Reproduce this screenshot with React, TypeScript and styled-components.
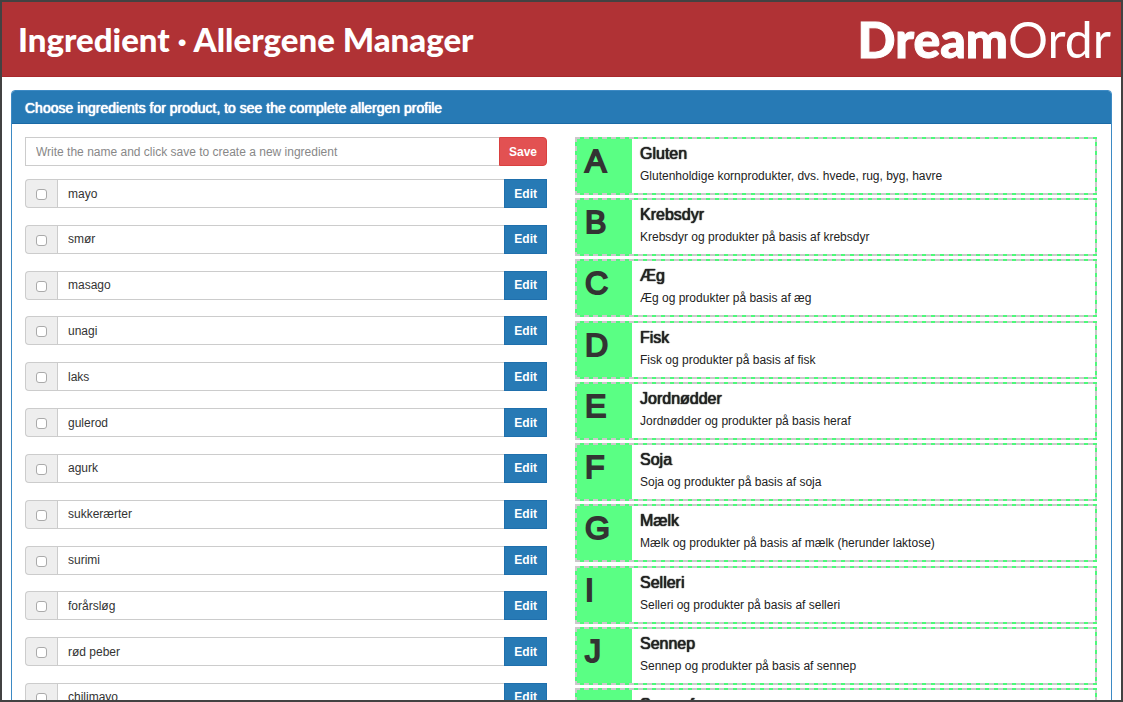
import React from "react";
import styled, { createGlobalStyle, css } from "styled-components";

const GlobalStyle = createGlobalStyle`
  * { box-sizing: border-box; }
  body {
    margin: 0;
    font-family: "Liberation Sans", Arial, sans-serif;
    font-size: 12px;
    line-height: 18px;
    color: #333;
    background: #fff;
  }
`;

const mediumWeight = css`
  font-weight: 400;
  text-shadow: 0 0 1px currentColor, 0 0 1px currentColor;
`;

const Frame = styled.div`
  height: 100vh;
  border: 2px solid #434242;
  overflow: hidden;
`;

const TopBar = styled.header`
  display: flex;
  justify-content: space-between;
  align-items: center;
  height: 75px;
  padding: 0 10px 0 16px;
  background: #b03235;
  border-bottom: 1px solid #a8292d;
  color: #fff;
`;

const PageTitle = styled.h1`
  margin: 0;
  font-family: Lato, "Open Sans", sans-serif;
  font-size: 33px;
  line-height: 40px;
  font-weight: 900;
  white-space: nowrap;
`;

const Logo = styled.a`
  color: #fff;
  font-family: Lato, "Open Sans", sans-serif;
  font-size: 50px;
  line-height: 60px;
  font-weight: 400;
  text-decoration: none;
  white-space: nowrap;
`;

const LogoStrong = styled.span`
  font-weight: 900;
  -webkit-text-stroke: 1px #fff;
`;

const Panel = styled.main`
  margin: 13px 9px;
  border: 1px solid #3d8ac4;
  border-radius: 4px;
`;

const PanelHeading = styled.h2`
  margin: 0;
  padding: 8px 13px 6px;
  background: #277ab5;
  border-bottom: 1px solid #1a6aa6;
  border-radius: 3px 3px 0 0;
  color: #fff;
  font-size: 14px;
  line-height: 18px;
  ${mediumWeight}
`;

const Columns = styled.div`
  display: grid;
  grid-template-columns: 1fr 1fr;
  gap: 28px;
  min-height: 635px;
  padding: 13px 14px 13px 13px;
`;

const Column = styled.section`
  display: flex;
  flex-direction: column;
`;

const InputGroup = styled.div`
  display: flex;
  height: 29px;
`;

const CreateForm = styled.form`
  display: flex;
  height: 29px;
  margin-bottom: 13px;
`;

const TextInput = styled.input`
  flex: 1;
  min-width: 0;
  padding: 0 10px;
  border: 1px solid #ccc;
  border-right: 0;
  border-radius: 0;
  background: #fff;
  color: #333;
  font: inherit;
  &::placeholder { color: #888; opacity: 1; }
`;

const Button = styled.button<{ $danger?: boolean }>`
  padding: 0 9px;
  border: 1px solid ${(p) => (p.$danger ? "#d9403f" : "#1f6fac")};
  border-radius: ${(p) => (p.$danger ? "0 4px 4px 0" : "0")};
  background: ${(p) => (p.$danger ? "#e25152" : "#277ab5")};
  color: #fff;
  font: inherit;
  font-weight: 700;
`;

const IngredientList = styled.ul`
  display: flex;
  flex: 1;
  flex-direction: column;
  justify-content: space-between;
  margin: 0;
  padding: 0 0 34px;
  list-style: none;
`;

const Addon = styled.label`
  display: flex;
  align-items: center;
  justify-content: center;
  width: 32px;
  border: 1px solid #ccc;
  border-right: 0;
  border-radius: 4px 0 0 4px;
  background: #eee;
`;

const Checkbox = styled.input`
  appearance: none;
  width: 11px;
  height: 11px;
  margin: 2px 0 0;
  border: 1px solid #aaa;
  border-radius: 3px;
  background: #fff;
  &:checked { background: #277ab5; }
`;

const AllergenList = styled.ul`
  display: flex;
  flex: 1;
  flex-direction: column;
  justify-content: space-between;
  margin: 0;
  padding: 0;
  list-style: none;
`;

const dashes = (direction: string) =>
  `repeating-linear-gradient(${direction}, #ccc8cb 0 5px, #4dfa7a 5px 9px)`;

const AllergenCard = styled.li`
  display: flex;
  height: 58px;
  padding: 2px;
  background:
    ${dashes("to right")} top / 100% 2px no-repeat,
    ${dashes("to right")} bottom / 100% 2px no-repeat,
    ${dashes("to bottom")} left / 2px 100% no-repeat,
    ${dashes("to bottom")} right / 2px 100% no-repeat,
    #fff;
`;

const Letter = styled.div`
  width: 55px;
  padding: 4px 8px;
  background: #5aff84;
  color: #333;
  font-size: 32px;
  line-height: 36px;
  -webkit-text-stroke: 2px #333;
`;

const AllergenText = styled.div`
  padding: 6px 8px;
`;

const AllergenName = styled.h3`
  margin: 0 0 4px;
  color: #222;
  font-size: 16px;
  line-height: 18px;
  ${mediumWeight}
`;

const AllergenInfo = styled.p`
  margin: 0;
  color: #222;
`;

const ingredients = [
  "mayo", "smør", "masago", "unagi", "laks", "gulerod", "agurk",
  "sukkerærter", "surimi", "forårsløg", "rød peber", "chilimayo",
];

const allergens = [
  ["A", "Gluten", "Glutenholdige kornprodukter, dvs. hvede, rug, byg, havre"],
  ["B", "Krebsdyr", "Krebsdyr og produkter på basis af krebsdyr"],
  ["C", "Æg", "Æg og produkter på basis af æg"],
  ["D", "Fisk", "Fisk og produkter på basis af fisk"],
  ["E", "Jordnødder", "Jordnødder og produkter på basis heraf"],
  ["F", "Soja", "Soja og produkter på basis af soja"],
  ["G", "Mælk", "Mælk og produkter på basis af mælk (herunder laktose)"],
  ["I", "Selleri", "Selleri og produkter på basis af selleri"],
  ["J", "Sennep", "Sennep og produkter på basis af sennep"],
  ["K", "Sesamfrø", "Sesamfrø og produkter på basis af sesamfrø"],
];

export default function App() {
  return (
    <>
      <GlobalStyle />
      <Frame>
        <TopBar>
          <PageTitle>Ingredient · Allergene Manager</PageTitle>
          <Logo href="#"><LogoStrong>Dream</LogoStrong>Ordr</Logo>
        </TopBar>
        <Panel>
          <PanelHeading>Choose ingredients for product, to see the complete allergen profile</PanelHeading>
          <Columns>
            <Column>
              <CreateForm onSubmit={(e) => e.preventDefault()}>
                <TextInput
                  aria-label="New ingredient"
                  placeholder="Write the name and click save to create a new ingredient"
                />
                <Button $danger type="submit">Save</Button>
              </CreateForm>
              <IngredientList>
                {ingredients.map((name) => (
                  <li key={name}>
                    <InputGroup>
                      <Addon>
                        <Checkbox type="checkbox" aria-label={name} />
                      </Addon>
                      <TextInput defaultValue={name} aria-label="Ingredient name" />
                      <Button type="button">Edit</Button>
                    </InputGroup>
                  </li>
                ))}
              </IngredientList>
            </Column>
            <Column>
              <AllergenList>
                {allergens.map(([letter, name, info]) => (
                  <AllergenCard key={letter}>
                    <Letter>{letter}</Letter>
                    <AllergenText>
                      <AllergenName>{name}</AllergenName>
                      <AllergenInfo>{info}</AllergenInfo>
                    </AllergenText>
                  </AllergenCard>
                ))}
              </AllergenList>
            </Column>
          </Columns>
        </Panel>
      </Frame>
    </>
  );
}
